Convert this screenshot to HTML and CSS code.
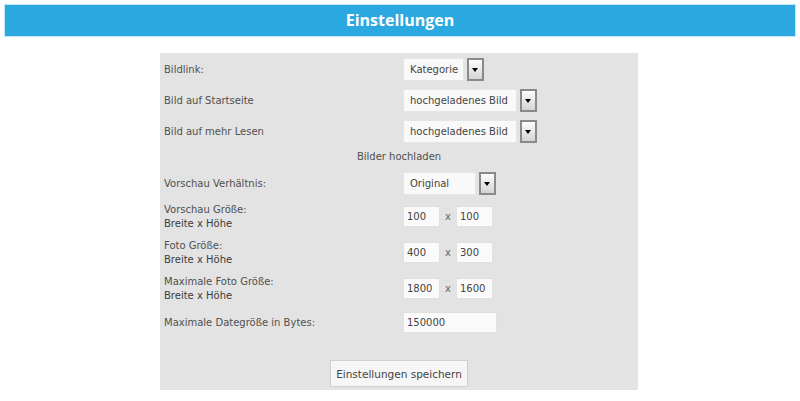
FILE: index.html
```html
<!DOCTYPE html>
<html lang="de">
<head>
<meta charset="UTF-8">
<meta name="viewport" content="width=device-width, initial-scale=1.0">
<title>Einstellungen</title>
<link rel="stylesheet" href="styles.css">
</head>
<body>

<div class="header">
  <h1>Einstellungen</h1>
</div>

<div class="panel">
  <form class="settings">
    <div class="row">
      <div class="label">Bildlink:</div>
      <div class="select w-small"><span>Kategorie</span><span class="arrow"></span></div>
    </div>
    <div class="row">
      <div class="label">Bild auf Startseite</div>
      <div class="select w-wide"><span>hochgeladenes Bild</span><span class="arrow"></span></div>
    </div>
    <div class="row">
      <div class="label">Bild auf mehr Lesen</div>
      <div class="select w-wide"><span>hochgeladenes Bild</span><span class="arrow"></span></div>
    </div>

    <div class="section">Bilder hochladen</div>

    <div class="row">
      <div class="label">Vorschau Verhältnis:</div>
      <div class="select w-mid"><span>Original</span><span class="arrow"></span></div>
    </div>
    <div class="row double">
      <div class="label">Vorschau Größe:<small>Breite x Höhe</small></div>
      <div class="pair">
        <input type="text" class="num" value="100"><span class="times">x</span><input type="text" class="num" value="100">
      </div>
    </div>
    <div class="row double">
      <div class="label">Foto Größe:<small>Breite x Höhe</small></div>
      <div class="pair">
        <input type="text" class="num" value="400"><span class="times">x</span><input type="text" class="num" value="300">
      </div>
    </div>
    <div class="row double">
      <div class="label">Maximale Foto Größe:<small>Breite x Höhe</small></div>
      <div class="pair">
        <input type="text" class="num" value="1800"><span class="times">x</span><input type="text" class="num" value="1600">
      </div>
    </div>
    <div class="row">
      <div class="label">Maximale Dategröße in Bytes:</div>
      <input type="text" class="bytes" value="150000">
    </div>

    <div class="actions">
      <input type="submit" value="Einstellungen speichern">
    </div>
  </form>
</div>

</body>
</html>
```

FILE: styles.css
```css
body {
  margin: 0;
  font-family: "DejaVu Sans", Verdana, sans-serif;
  font-size: 10px;
  color: #505050;
  background-color: #fff;
}

.header {
  margin: 4px 4px 0 4px;
  border: 1px solid #c4e7f7;
}

.header h1 {
  margin: 0;
  height: 31px;
  line-height: 31px;
  background-color: #2ca8e1;
  color: white;
  text-align: center;
  font-family: "Open Sans", sans-serif;
  font-size: 16px;
  font-weight: bold;
}

.panel {
  width: 478px;
  margin: 16px 0 0 160px;
  background-color: #e3e3e3;
  padding: 4px 0 3px 0;
}

.settings {
  display: flex;
  flex-direction: column;
  gap: 7px;
}

.row {
  display: grid;
  grid-template-columns: 243px 1fr;
  align-items: center;
  height: 24px;
}

.row.double {
  height: 29px;
}

.label {
  padding-left: 4px;
  line-height: 15px;
  white-space: nowrap;
}

.label small {
  display: block;
  font-size: 10px;
  line-height: 14px;
  color: #3c3c3c;
}

.section {
  text-align: center;
  height: 14px;
  line-height: 14px;
}

/* fake select boxes */
.select {
  display: flex;
  gap: 3px;
  height: 23px;
}

.select span:first-child {
  flex: 1;
  background-color: #f9f9f9;
  border: 1px solid #e6e6e6;
  color: #444;
  padding-left: 6px;
  line-height: 21px;
  white-space: nowrap;
  overflow: hidden;
}

.select .arrow {
  width: 13px;
  border: 2px solid #8a8a8a;
  background: linear-gradient(#fdfdfd, #d4d4d4);
  position: relative;
}

.select .arrow::after {
  content: "";
  position: absolute;
  left: 3px;
  top: 8px;
  border-left: 3.5px solid transparent;
  border-right: 3.5px solid transparent;
  border-top: 4px solid #000;
}

.w-small { width: 81px; }
.w-wide { width: 134px; }
.w-mid { width: 93px; }

.pair {
  display: flex;
  align-items: center;
}

.times {
  width: 16px;
  text-align: center;
  color: #666;
}

input[type="text"] {
  box-sizing: border-box;
  height: 21px;
  border: 1px solid #e0e0e0;
  background-color: #fafafa;
  font-family: "DejaVu Sans", Verdana, sans-serif;
  font-size: 10px;
  color: #444;
  padding: 0 3px;
  margin: 0;
}

.num { width: 37px; }
.bytes { width: 94px; }

.actions {
  text-align: center;
  margin-top: 19px;
}

input[type="submit"] {
  width: 138px;
  height: 27px;
  border: 1px solid #cfcfcf;
  background-color: #f6f6f6;
  font-family: "DejaVu Sans", Verdana, sans-serif;
  font-size: 10.5px;
  color: #444;
  cursor: pointer;
  padding: 0;
}
```
